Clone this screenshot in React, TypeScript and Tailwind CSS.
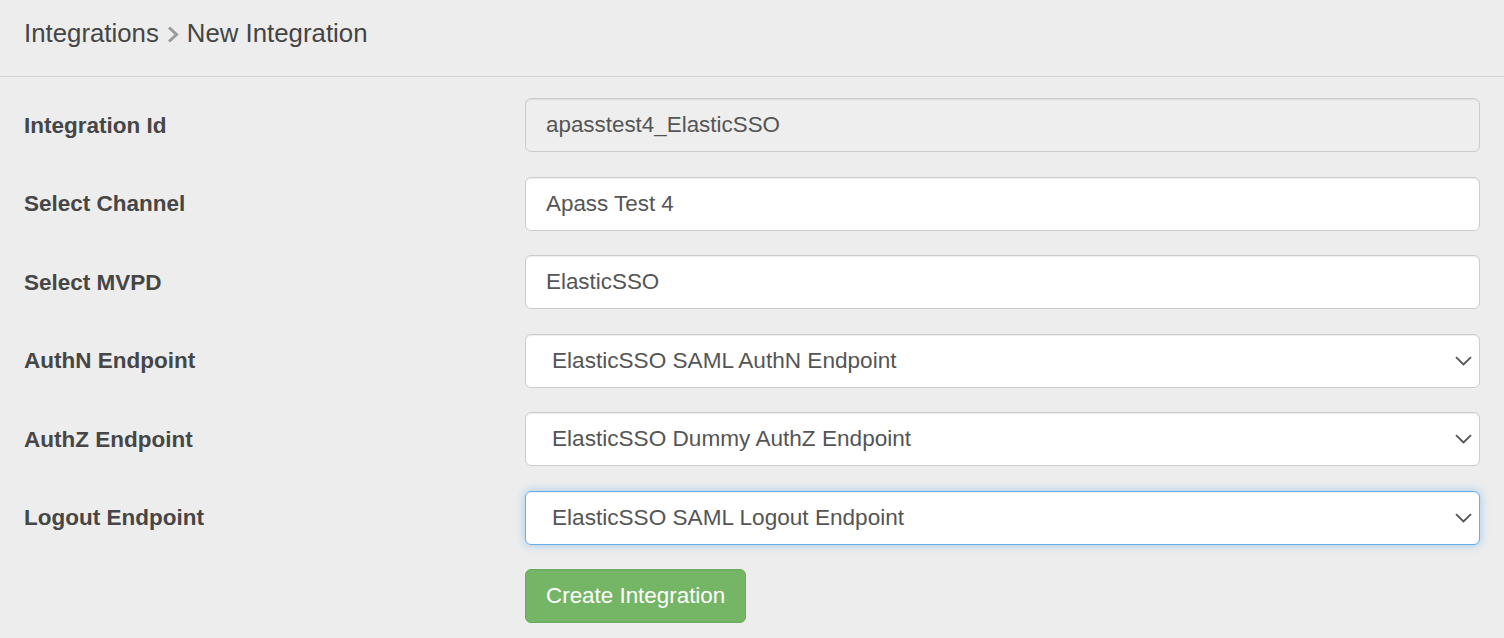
import React from "react";

const font = { fontFamily: '"Liberation Sans", Arial, Helvetica, sans-serif' };

function Chevron() {
  return (
    <svg width="17" height="10" viewBox="0 0 17 10" className="shrink-0">
      <path d="M1 1.2 L8.5 8.5 L16 1.2" fill="none" stroke="#555" strokeWidth="1.8" />
    </svg>
  );
}

function Row({ label, children }: { label: string; children: React.ReactNode }) {
  return (
    <div className="flex items-center">
      <div className="w-[501px] shrink-0 text-[22.5px] font-bold text-[#464646] pt-[1px]">{label}</div>
      <div className="flex-1">{children}</div>
    </div>
  );
}

function TextBox({ value, readOnly }: { value: string; readOnly?: boolean }) {
  return (
    <div
      className={`h-[54px] flex items-center px-[20px] rounded-[6px] border border-[#cccccc] text-[22.4px] text-[#555] shadow-[inset_0_1px_1px_rgba(0,0,0,0.075)] ${
        readOnly ? "bg-[#eeeeee]" : "bg-white"
      }`}
    >
      {value}
    </div>
  );
}

function SelectBox({ value, focused }: { value: string; focused?: boolean }) {
  return (
    <div
      className={`h-[54px] flex items-center justify-between pl-[26px] pr-[7px] rounded-[6px] border bg-white text-[22.6px] text-[#555] ${
        focused
          ? "border-[#66afe9] shadow-[inset_0_1px_1px_rgba(0,0,0,0.075),0_0_10px_rgba(102,175,233,0.6)]"
          : "border-[#cccccc] shadow-[inset_0_1px_1px_rgba(0,0,0,0.075)]"
      }`}
    >
      <span>{value}</span>
      <Chevron />
    </div>
  );
}

export default function App() {
  return (
    <div className="w-[1504px] h-[638px] bg-[#ededed] overflow-hidden" style={font}>
      <div className="h-[77px] border-b border-[#d4d4d4] flex items-center pl-[24px] pb-[9px] text-[25.8px] text-[#454545]">
        <span>Integrations</span>
        <svg width="12" height="17" viewBox="0 0 12 17" className="mx-[8px] mt-[2px]">
          <path d="M2 1.5 L9.5 8.5 L2 15.5" fill="none" stroke="#9a9a9a" strokeWidth="3" />
        </svg>
        <span>New Integration</span>
      </div>
      <div className="pl-[24px] pr-[24px] pt-[21px] flex flex-col gap-[24.5px]">
        <Row label="Integration Id">
          <TextBox value="apasstest4_ElasticSSO" readOnly />
        </Row>
        <Row label="Select Channel">
          <TextBox value="Apass Test 4" />
        </Row>
        <Row label="Select MVPD">
          <TextBox value="ElasticSSO" />
        </Row>
        <Row label="AuthN Endpoint">
          <SelectBox value="ElasticSSO SAML AuthN Endpoint" />
        </Row>
        <Row label="AuthZ Endpoint">
          <SelectBox value="ElasticSSO Dummy AuthZ Endpoint" />
        </Row>
        <Row label="Logout Endpoint">
          <SelectBox value="ElasticSSO SAML Logout Endpoint" focused />
        </Row>
        <div className="flex">
          <div className="w-[501px] shrink-0" />
          <button className="h-[54px] px-[20px] rounded-[6px] bg-[#74b566] border border-[#69a95b] text-white text-[22.4px]">
            Create Integration
          </button>
        </div>
      </div>
    </div>
  );
}
